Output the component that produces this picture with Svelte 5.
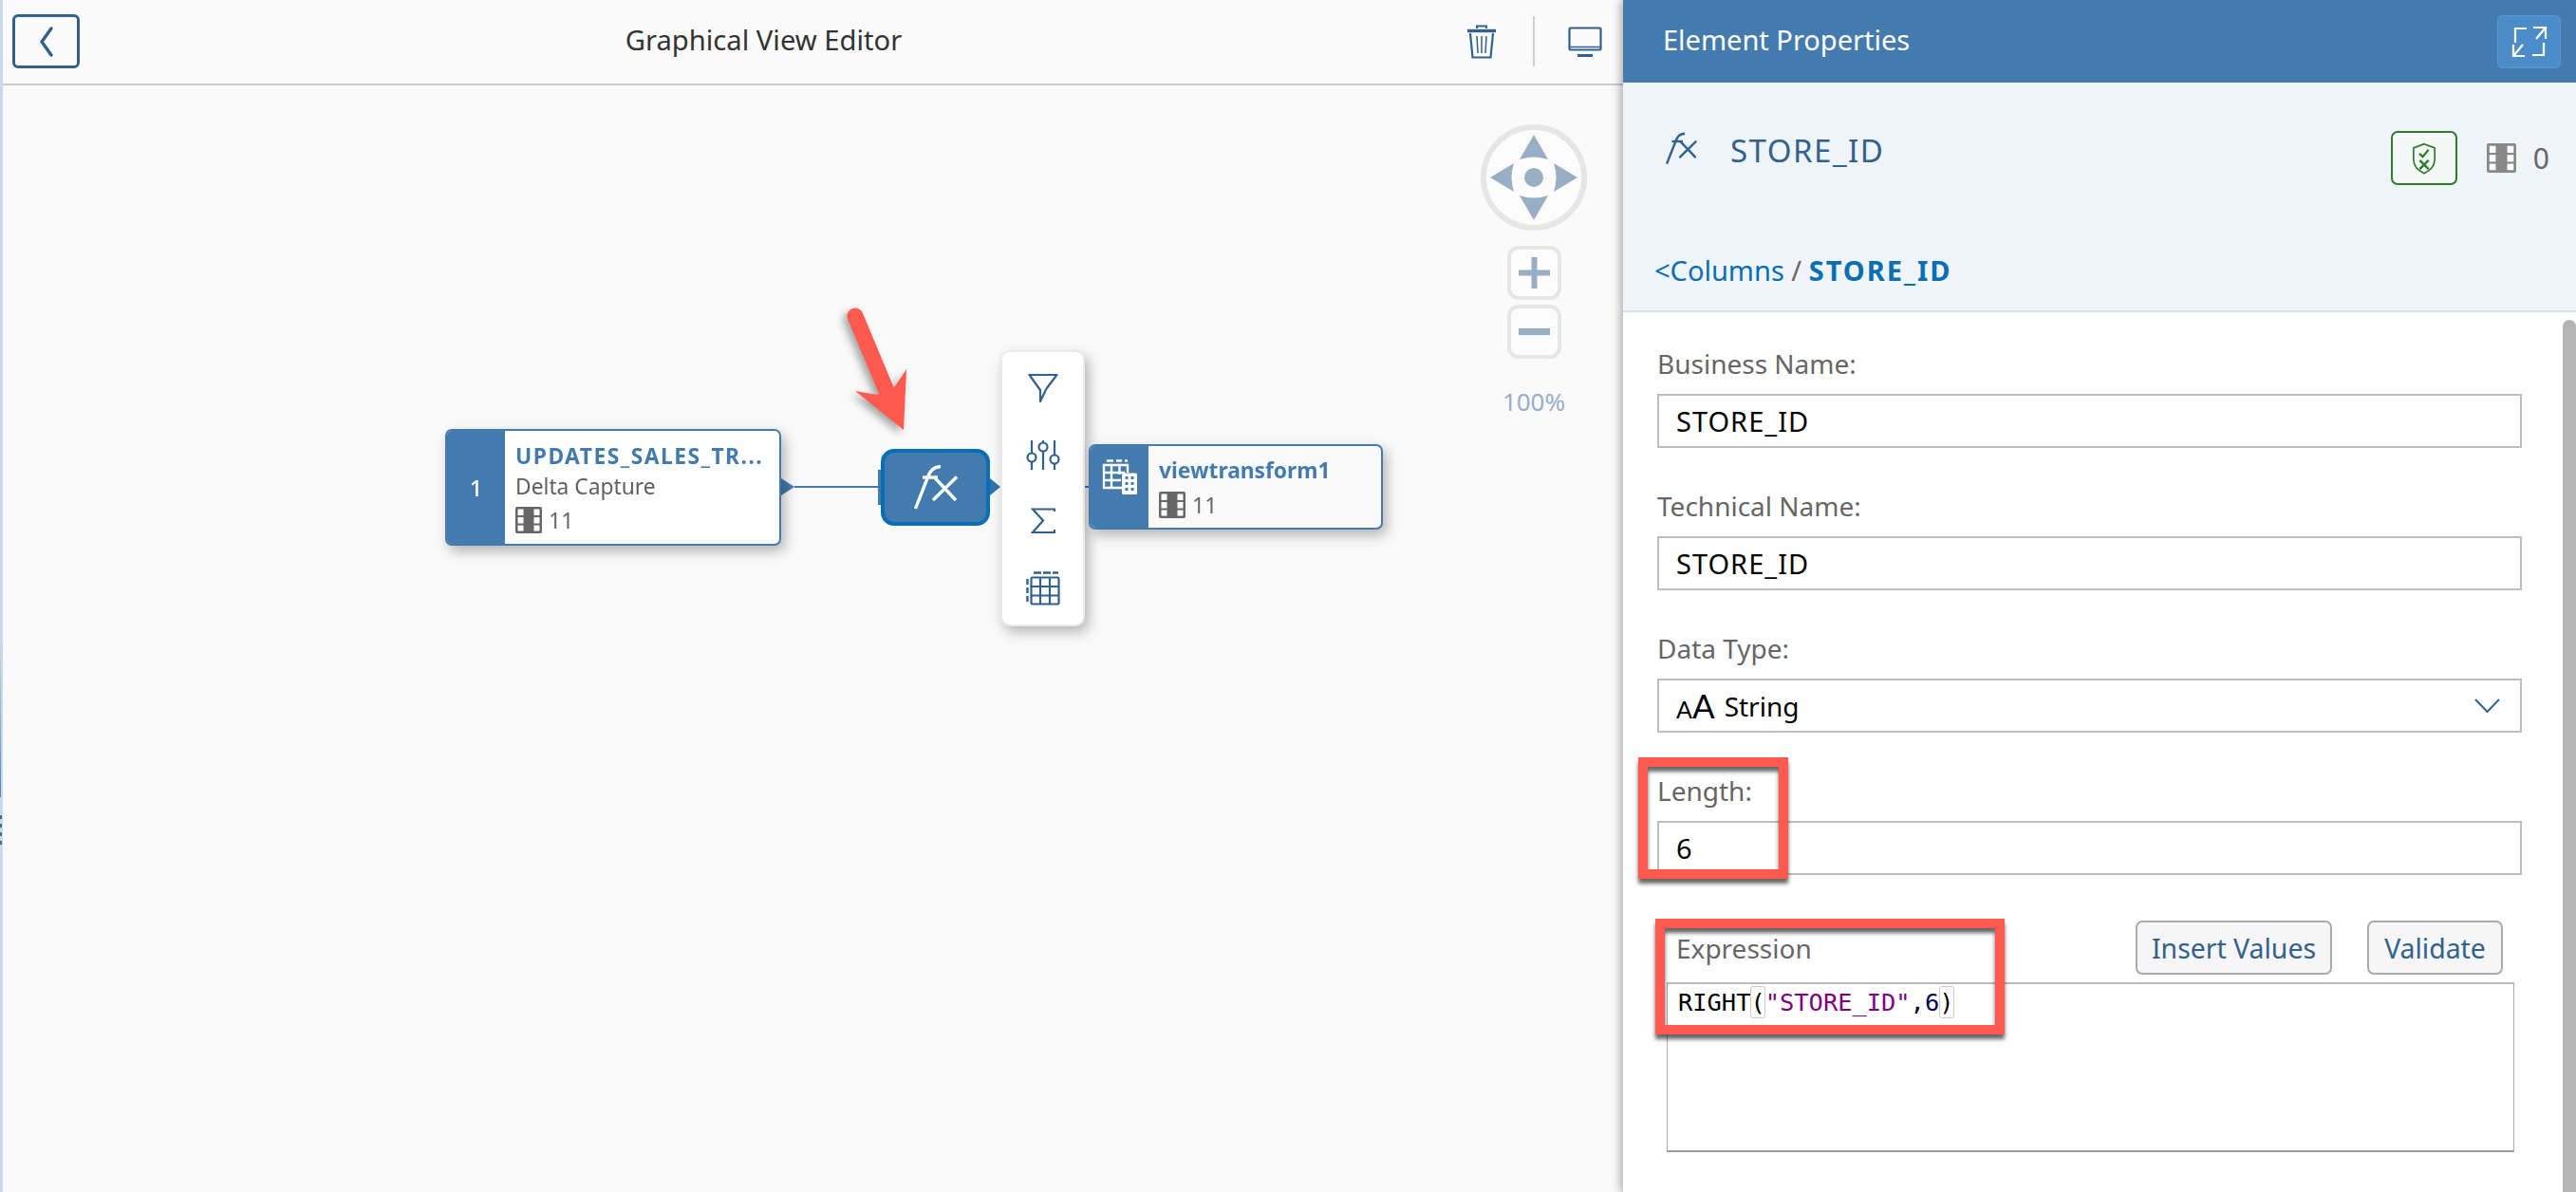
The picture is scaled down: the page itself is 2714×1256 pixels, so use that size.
<script>
    const fields = [
        { label: "Business Name:", value: "STORE_ID" },
        { label: "Technical Name:", value: "STORE_ID" },
        { label: "Data Type:", value: "String", select: true },
        { label: "Length:", value: "6" }
    ];
</script>

{#snippet film()}
    <svg class="film" viewBox="0 0 28 28">
        <rect width="28" height="28" rx="2" fill="currentColor"/>
        <g fill="#fff">
            <rect x="2.500" y="2.500" width="6" height="6.500"/><rect x="19.500" y="2.500" width="6" height="6.500"/>
            <rect x="2.500" y="11" width="6" height="6.500"/><rect x="19.500" y="11" width="6" height="6.500"/>
            <rect x="2.500" y="19.500" width="6" height="6"/><rect x="19.500" y="19.500" width="6" height="6"/>
        </g>
    </svg>
{/snippet}

{#snippet fx()}
    <svg class="fx" viewBox="0 0 46 47" fill="none" stroke="currentColor" stroke-width="3.400">
        <path d="M1.500 46 L14 14 C17 6 20 2 28 1.500"/>
        <path d="M9 13 H25"/>
        <path d="M21 12.500 L44 37 M45 12.500 L20 37"/>
    </svg>
{/snippet}

<div class="screen">
    <div class="strip">
        <div class="strip-handle"></div>
        <div class="strip-dots"><i></i><i></i><i></i><i></i></div>
    </div>

    <div class="editor-side">
        <header class="topbar">
            <button class="back" aria-label="Back">
                <svg viewBox="0 0 24 34" width="24" height="34" fill="none" stroke="#31618c" stroke-width="3.400" stroke-linecap="round" stroke-linejoin="round"><path d="M17 3 L7 17 L17 31"/></svg>
            </button>
            <h1>Graphical View Editor</h1>
            <div class="tools">
                <svg class="trash" viewBox="0 0 32 36" fill="none" stroke="#31618c" stroke-width="2.200">
                    <path d="M1 6.500 H31" stroke-width="3.400"/>
                    <path d="M11 4 V1.500 H21 V4" stroke-width="2"/>
                    <path d="M4 9 L6.500 34.500 H25.500 L28 9"/>
                    <path d="M11 12 L12 30 M16 12 V30 M21 12 L20 30" stroke-width="1.500"/>
                </svg>
                <span class="tool-sep"></span>
                <svg class="monitor" viewBox="0 0 36 32" fill="none" stroke="#31618c" stroke-width="2.200">
                    <rect x="1.500" y="1.500" width="33" height="23" rx="1"/>
                    <path d="M1.500 21.500 H34.500" stroke-width="1.500"/>
                    <path d="M10 30.500 H26" stroke-width="3"/>
                </svg>
            </div>
        </header>

        <main class="canvas">
            <svg class="wires" width="1707" height="1166">
                <path d="M834 423 H922" stroke="#437bae" stroke-width="2"/>
                <path d="M820 414 L834 423 L820 432 Z" fill="#437bae"/>
                <rect x="922" y="405" width="4" height="37" fill="#437bae"/>
                <path d="M1040 414 L1051 423 L1040 432 Z" fill="#2f75ad"/>
                <path d="M1140 423 H1146" stroke="#437bae" stroke-width="2"/>
            </svg>

            <div class="node source">
                <div class="node-side">1</div>
                <div class="node-body">
                    <div class="node-title">UPDATES_SALES_TR...</div>
                    <div class="node-sub">Delta Capture</div>
                    <div class="node-count">{@render film()}11</div>
                </div>
            </div>

            <div class="fx-node">{@render fx()}</div>

            <div class="popup">
                <svg viewBox="0 0 32 32" width="32" height="32" fill="none" stroke="#31618c" stroke-width="2.200" stroke-linejoin="round">
                    <path d="M1.500 2 H30.500 L19.500 16.500 L13 30 V18 Z"/>
                </svg>
                <svg viewBox="0 0 36 32" width="36" height="32" fill="none" stroke="#31618c" stroke-width="2.200">
                    <path d="M6 0 V13 M6 23 V31 M18 0 V2 M18 11 V31 M30 0 V15 M30 24 V31"/>
                    <circle cx="6" cy="18" r="4.500"/><circle cx="18" cy="7" r="4.500"/><circle cx="30" cy="20" r="4.500"/>
                </svg>
                <svg viewBox="0 0 26 28" width="26" height="28" fill="none" stroke="#31618c" stroke-width="2.200">
                    <path d="M25 4 V1.500 H2 L13 13.500 L2 26 H25 V23"/>
                </svg>
                <svg viewBox="0 0 36 36" width="36" height="36" fill="none" stroke="#31618c" stroke-width="2.200">
                    <rect x="5.500" y="6.500" width="29" height="28" rx="1"/>
                    <path d="M15 6.500 V34.500 M25 6.500 V34.500 M5.500 16 H34.500 M5.500 25.500 H34.500"/>
                    <path d="M8 1.500 H34" stroke-dasharray="8 2" stroke-width="2.400"/>
                    <path d="M1.500 8 V34" stroke-dasharray="6 3" stroke-width="2.400"/>
                </svg>
            </div>

            <div class="node target">
                <div class="node-side">
                    <svg viewBox="0 0 38 38" width="38" height="38" fill="none" stroke="#fff" stroke-width="2.400">
                        <path d="M5 1.500 H12 M15 1.500 H21 M24 1.500 H27" stroke-width="2.600"/>
                        <path d="M22 30 H2 V6 H27 V14"/>
                        <path d="M2 14 H24 M2 22 H20 M10 6 V30 M18.500 6 V16"/>
                        <rect x="21" y="14.500" width="16" height="22.500" rx="1.500" fill="#fff" stroke="none"/>
                        <path d="M24.500 19.500 H27.500 M30.500 19.500 H33.500 M24.500 25.500 H27.500 M30.500 25.500 H33.500 M24.500 31.500 H27.500 M30.500 31.500 H33.500" stroke="#437bae" stroke-width="3"/>
                    </svg>
                </div>
                <div class="node-body">
                    <div class="node-title">viewtransform1</div>
                    <div class="node-count">{@render film()}11</div>
                </div>
            </div>

            <svg class="red-arrow" width="90" height="150" viewBox="0 0 90 150">
                <path d="M9 9 L42 88" stroke="#ff5a4d" stroke-width="17" stroke-linecap="round"/>
                <path d="M9 88 L32 92 L51 83 L63 65 L60 129 Z" fill="#ff5a4d"/>
            </svg>

            <div class="nav">
                <svg viewBox="0 0 112 112" width="112" height="112">
                    <circle cx="56" cy="56" r="53" fill="#fcfcfc" stroke="#e6e6e6" stroke-width="6"/>
                    <g fill="#98aec4">
                        <path d="M56 11 L71 37 Q56 32 41 37 Z"/>
                        <path d="M56 101 L71 75 Q56 80 41 75 Z"/>
                        <path d="M10 56 L35 41 Q30 56 35 71 Z"/>
                        <path d="M102 56 L77 41 Q82 56 77 71 Z"/>
                        <circle cx="56" cy="56" r="10"/>
                    </g>
                </svg>
                <div class="zoom-btn plus"><svg viewBox="0 0 33 33" width="33" height="33"><path d="M13.500 0 h6 v13.500 h13.500 v6 h-13.500 v13.500 h-6 v-13.500 h-13.500 v-6 h13.500 Z" fill="#98aec4"/></svg></div>
                <div class="zoom-btn"><svg viewBox="0 0 33 7" width="33" height="7"><rect width="33" height="7" fill="#98aec4"/></svg></div>
                <div class="zoom-level">100%</div>
            </div>
        </main>
    </div>

    <aside class="panel">
        <div class="panel-head">
            <span>Element Properties</span>
            <button class="expand" aria-label="Expand">
                <svg viewBox="0 0 40 34" width="40" height="34" fill="none" stroke="#fff" stroke-width="2.200">
                    <path d="M17 3 H5 V18"/>
                    <path d="M24 2 H37 V14 M37 2 L27 14"/>
                    <path d="M35 18 V31 H23"/>
                    <path d="M3 20 V32 H15 M3 32 L13 20"/>
                </svg>
            </button>
        </div>

        <div class="panel-sub">
            <div class="sub-top">
                {@render fx()}
                <span class="sub-name">STORE_ID</span>
                <div class="sub-right">
                    <button class="shield" aria-label="Validation">
                        <svg viewBox="0 0 28 36" width="26" height="34" fill="none" stroke="#2b7d2b" stroke-width="1.800">
                            <path d="M14 1.500 L26 6 V19 C26 27 20 32 14 35 C8 32 2 27 2 19 V6 Z"/>
                            <path d="M8.500 12.500 L12.500 16 L19 8" stroke-width="2.400"/>
                            <path d="M9 20 L19 30 M19 20 L9 30" stroke-width="2.600"/>
                        </svg>
                    </button>
                    <span class="sub-film">{@render film()}</span>
                    <span class="sub-count">0</span>
                </div>
            </div>
            <div class="crumbs"><span class="crumb-link">&lt;Columns</span> <span class="crumb-sep">/</span> <strong>STORE_ID</strong></div>
        </div>

        <div class="panel-body">
            <div class="form">
                {#each fields as f}
                    <div class="field">
                        <div class="label">{f.label}</div>
                        <div class="input">
                            {#if f.select}
                                <span class="aa"><small>A</small>A</span>
                            {/if}
                            <span class:caps={!f.select}>{f.value}</span>
                            {#if f.select}
                                <svg class="chev" viewBox="0 0 27 15" width="27" height="15" fill="none" stroke="#31618c" stroke-width="2"><path d="M1 1 L13.500 14 L26 1"/></svg>
                            {/if}
                        </div>
                    </div>
                {/each}

                <div class="expr-row">
                    <div class="label">Expression</div>
                    <div class="expr-btns">
                        <button class="btn btn-insert">Insert Values</button>
                        <button class="btn btn-validate">Validate</button>
                    </div>
                </div>
                <div class="code"><span class="k">RIGHT</span><span class="m">(</span><span class="s">"STORE_ID"</span><span class="k">,</span><span class="n">6</span><span class="m">)</span></div>
            </div>
            <div class="scroll"></div>
        </div>
    </aside>

    <div class="mark mark-length"></div>
    <div class="mark mark-expr"></div>
</div>

<style>
    :global(body) {
        margin: 0;
        background: #fff;
    }

    .screen {
        position: relative;
        display: flex;
        width: 2714px;
        height: 1256px;
        overflow: hidden;
        font-family: "Noto Sans", Lato, sans-serif;
        color: #333;
    }

    .strip {
        position: relative;
        width: 3px;
        flex: none;
        background: #c9d9ea;
    }
    .strip-handle {
        position: absolute;
        top: 680px;
        left: 0;
        width: 1px;
        height: 160px;
        background: linear-gradient(#c9d9ea, #4a86c5);
    }
    .strip-dots {
        position: absolute;
        top: 859px;
        left: 0;
        display: flex;
        flex-direction: column;
        gap: 5px;
    }
    .strip-dots i {
        display: block;
        width: 2px;
        height: 4px;
        background: #3f6f9f;
    }

    .editor-side {
        width: 1707px;
        flex: none;
        display: flex;
        flex-direction: column;
    }

    .topbar {
        position: relative;
        height: 88px;
        flex: none;
        display: flex;
        align-items: center;
        justify-content: center;
        background: #fbfbfb;
        border-bottom: 2px solid #cbcbcb;
    }
    .back {
        position: absolute;
        left: 10px;
        top: 15px;
        width: 71px;
        height: 57px;
        padding: 0;
        display: flex;
        align-items: center;
        justify-content: center;
        box-sizing: border-box;
        background: none;
        border: 3px solid #31618c;
        border-radius: 6px;
    }
    .topbar h1 {
        margin: -4px 0 0 -104px;
        font-size: 29.200px;
        font-weight: 400;
        color: #333;
    }
    .tools {
        position: absolute;
        left: 1542px;
        top: 17px;
        display: flex;
        align-items: center;
        height: 53px;
    }
    .trash { width: 32px; height: 36px; }
    .tool-sep {
        width: 2px;
        height: 53px;
        margin: 0 35px 0 38px;
        background: #cfcfcf;
    }
    .monitor { width: 36px; height: 32px; }

    .canvas {
        position: relative;
        flex: 1;
        background: #fafafa;
    }
    .wires {
        position: absolute;
        inset: 0;
    }

    .node {
        position: absolute;
        display: flex;
        box-sizing: border-box;
        border: 2px solid #437bae;
        border-radius: 7px;
        overflow: hidden;
    }
    .source {
        left: 466px;
        top: 362px;
        width: 354px;
        height: 123px;
        background: #fff;
    }
    .target {
        left: 1144px;
        top: 378px;
        width: 310px;
        height: 90px;
        background: #fafafa;
    }
    .node-side {
        width: 61px;
        flex: none;
        display: flex;
        align-items: center;
        justify-content: center;
        background: #437bae;
        color: #fff;
        font-size: 24px;
        font-weight: 500;
    }
    .target .node-side {
        align-items: flex-start;
        padding-top: 14px;
        box-sizing: border-box;
    }
    .node-body {
        padding-left: 11px;
        min-width: 0;
    }
    .source .node-body { padding-top: 12px; }
    .target .node-body { padding-top: 11px; }
    .node-title {
        font-size: 22.800px;
        font-weight: 700;
        line-height: 30px;
        color: #437bae;
        white-space: nowrap;
    }
    .source .node-title { letter-spacing: 1.500px; }
    .node-sub {
        font-size: 22.800px;
        line-height: 34px;
        color: #5f5f5f;
    }
    .node-count {
        display: flex;
        align-items: center;
        gap: 7px;
        margin-top: 3px;
        font-size: 23px;
        line-height: 30px;
        color: #666;
    }
    .target .node-count { margin-top: 6px; }
    .film {
        width: 28px;
        height: 28px;
        color: #666;
        flex: none;
    }
    .source, .target, .popup {
        filter: drop-shadow(4px 6px 7px rgba(0, 0, 0, 0.28));
    }

    .fx-node {
        position: absolute;
        left: 925px;
        top: 383px;
        width: 115px;
        height: 81px;
        box-sizing: border-box;
        display: flex;
        align-items: center;
        justify-content: center;
        background: #437bae;
        border: 4px solid #0a6eb4;
        border-radius: 14px;
        color: #fff;
    }
    .fx-node .fx {
        width: 46px;
        height: 47px;
    }

    .popup {
        position: absolute;
        left: 1051px;
        top: 279px;
        width: 89px;
        height: 291px;
        box-sizing: border-box;
        padding: 22px 0 20px;
        display: flex;
        flex-direction: column;
        align-items: center;
        justify-content: space-between;
        background: #fff;
        border: 2px solid #eaeaea;
        border-radius: 10px;
    }

    .red-arrow {
        position: absolute;
        left: 889px;
        top: 234px;
        overflow: visible;
        filter: drop-shadow(-4px 4px 4px rgba(0, 0, 0, 0.35));
    }

    .nav {
        position: absolute;
        left: 1557px;
        top: 41px;
        width: 112px;
        display: flex;
        flex-direction: column;
        align-items: center;
    }
    .zoom-btn {
        width: 57px;
        height: 57px;
        box-sizing: border-box;
        margin-top: 5px;
        display: flex;
        align-items: center;
        justify-content: center;
        background: #fcfcfc;
        border: 4px solid #e6e6e6;
        border-radius: 12px;
    }
    .zoom-btn.plus { margin-top: 16px; }
    .zoom-level {
        margin-top: 30px;
        font-size: 26px;
        line-height: 30px;
        color: #98aec4;
    }

    .panel {
        position: relative;
        width: 1004px;
        flex: none;
        display: flex;
        flex-direction: column;
        background: #fff;
        box-shadow: -3px 0 9px rgba(0, 0, 0, 0.3);
    }
    .panel-head {
        height: 87px;
        flex: none;
        box-sizing: border-box;
        padding: 0 16px 0 42px;
        display: flex;
        align-items: center;
        justify-content: space-between;
        background: #437bae;
        color: #fff;
        font-size: 29px;
    }
    .panel-head span { margin-top: -4px; }
    .expand {
        width: 67px;
        height: 56px;
        padding: 0;
        display: flex;
        align-items: center;
        justify-content: center;
        background: #4b8cc9;
        border: 1px solid #5a97cf;
        border-radius: 5px;
    }

    .panel-sub {
        height: 242px;
        flex: none;
        box-sizing: border-box;
        background: #eff4f9;
        border-bottom: 2px solid #d3e0ee;
        display: flex;
        flex-direction: column;
    }
    .sub-top {
        position: relative;
        display: flex;
        align-items: flex-start;
        padding: 52px 28px 0 45px;
        color: #31618c;
    }
    .sub-top .fx {
        width: 33px;
        height: 35px;
        margin-right: 35px;
    }
    .sub-name {
        font-size: 33px;
        line-height: 36px;
        margin-top: 2px;
        letter-spacing: 1.500px;
    }
    .sub-right {
        margin-left: auto;
        display: flex;
        align-items: center;
        margin-top: -1px;
    }
    .shield {
        width: 70px;
        height: 57px;
        padding: 0;
        display: flex;
        align-items: center;
        justify-content: center;
        background: #f6f7f7;
        border: 2px solid #2b7d2b;
        border-radius: 7px;
    }
    .sub-film {
        display: flex;
        margin-left: 31px;
    }
    .sub-film .film {
        width: 31px;
        height: 31px;
        color: #888;
    }
    .sub-count {
        margin-left: 18px;
        font-size: 30px;
        color: #666;
    }
    .crumbs {
        margin-top: auto;
        padding: 0 0 24px 33px;
        font-size: 29px;
        line-height: 36px;
        color: #0a6eb4;
    }
    .crumbs strong { letter-spacing: 2px; }
    .crumb-sep { color: #666; }

    .panel-body {
        flex: 1;
        display: flex;
        min-height: 0;
    }
    .form {
        flex: 1;
        box-sizing: border-box;
        padding: 34px 43px 0 36px;
    }
    .field { margin-bottom: 41px; }
    .label {
        font-size: 28px;
        line-height: 40px;
        color: #666;
    }
    .field .label { margin-bottom: 12px; }
    .input {
        height: 57px;
        box-sizing: border-box;
        padding: 0 18px;
        display: flex;
        align-items: center;
        background: #fff;
        border: 2px solid #bdbdbd;
        font-size: 28px;
        color: #000;
    }
    .caps {
        font-size: 29px;
        letter-spacing: 1px;
    }
    .aa {
        margin-right: 10px;
        font-size: 35px;
        line-height: 1;
        font-family: Lato, sans-serif;
        font-weight: 400;
    }
    .aa small { font-size: 25px; }
    .chev { margin-left: auto; margin-right: 3px; }

    .expr-row {
        display: flex;
        align-items: center;
        justify-content: space-between;
        margin: 48px 20px 8px 20px;
        height: 57px;
    }
    .expr-btns {
        display: flex;
        gap: 37px;
    }
    .btn {
        height: 57px;
        padding: 0;
        background: #f6f6f6;
        border: 2px solid #ababab;
        border-radius: 7px;
        font: 400 28.400px "Noto Sans", Lato, sans-serif;
        color: #31618c;
    }
    .btn-insert { width: 207px; }
    .btn-validate { width: 143px; }
    .code {
        height: 179px;
        margin: 0 8px 0 10px;
        box-sizing: border-box;
        padding: 2px 11px;
        background: #fff;
        border: 1px solid #aaa;
        border-top: 2px solid #bbb;
        border-bottom: 2px solid #999;
        font-family: "DejaVu Sans Mono", "Liberation Mono", monospace;
        font-size: 25.400px;
        line-height: 34px;
        white-space: pre;
    }
    .k { color: #000; }
    .s { color: #800080; }
    .n { color: #000060; }
    .m {
        display: inline-block;
        height: 34px;
        color: #000;
        outline: 1px solid #c9c9c9;
        outline-offset: -1px;
        border-radius: 3px;
    }

    .scroll {
        width: 14px;
        flex: none;
        margin-top: 8px;
        background: #b4b4b4;
        border-radius: 7px 7px 0 0;
    }

    .mark {
        position: absolute;
        box-sizing: border-box;
        border: 10px solid #ff5a4d;
        filter: drop-shadow(0 5px 2px rgba(0, 0, 0, 0.6));
        pointer-events: none;
    }
    .mark-length {
        left: 1726px;
        top: 798px;
        width: 158px;
        height: 128px;
    }
    .mark-expr {
        left: 1744px;
        top: 968px;
        width: 368px;
        height: 122px;
    }
</style>
